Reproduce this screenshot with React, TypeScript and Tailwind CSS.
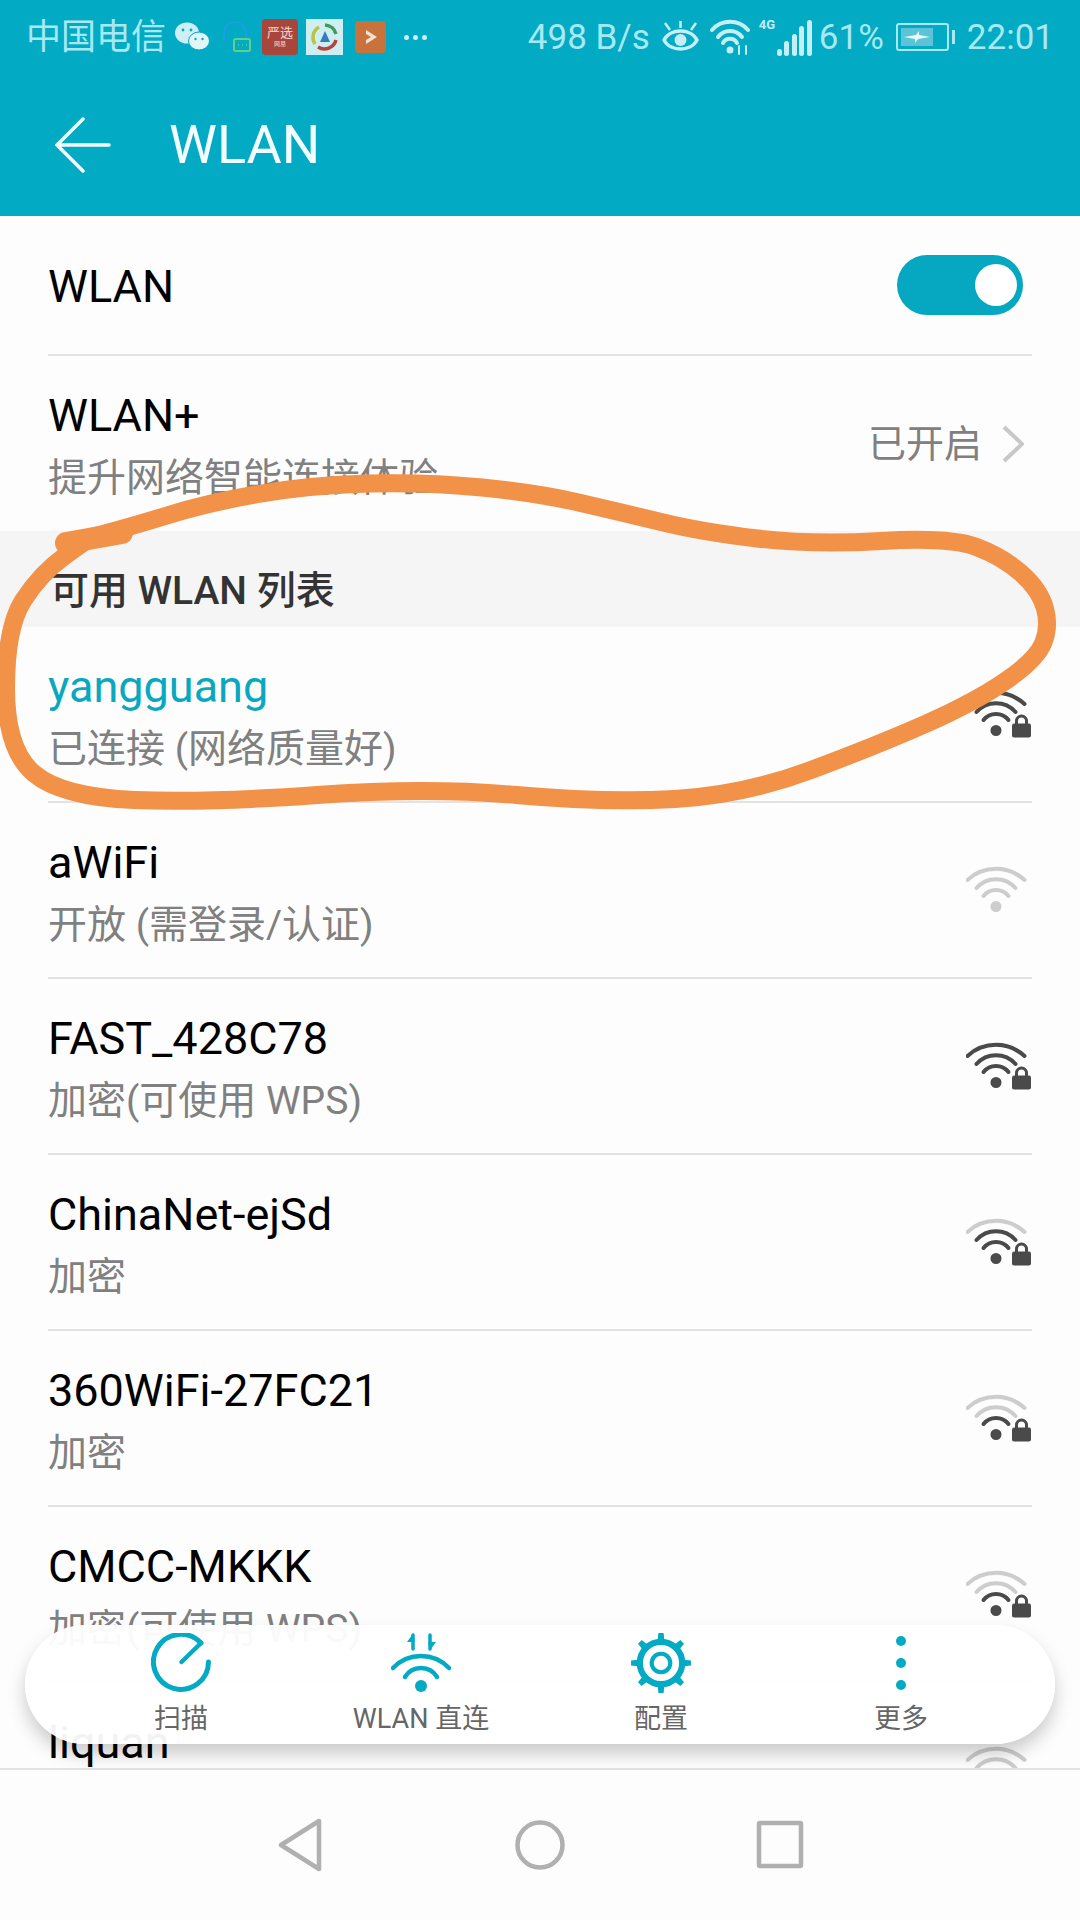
const TEAL = "#02aac4";

const networks = [
  { name: "yangguang", sub: "已连接 (网络质量好)", level: 3, locked: true, active: true },
  { name: "aWiFi", sub: "开放 (需登录/认证)", level: 0, locked: false },
  { name: "FAST_428C78", sub: "加密(可使用 WPS)", level: 3, locked: true },
  { name: "ChinaNet-ejSd", sub: "加密", level: 2, locked: true },
  { name: "360WiFi-27FC21", sub: "加密", level: 1, locked: true },
  { name: "CMCC-MKKK", sub: "加密(可使用 WPS)", level: 1, locked: true },
  { name: "liquan", sub: "加密", level: 1, locked: true },
];

// marker scribble, hand traced from the reference
const scribble: [number, number][] = [
  [69, 543], [127, 528], [207, 503], [310, 485], [427, 482], [537, 493], [620, 512], [702, 532],
  [813, 545], [950, 537], [1003, 557], [1040, 590], [1050, 627], [1036, 660], [975, 702], [878, 745],
  [744, 795], [606, 803], [427, 787], [207, 803], [62, 797], [6, 750], [6, 627], [41, 573], [90, 538],
];

function smoothPath(pts: [number, number][]) {
  let d = `M${pts[0][0]} ${pts[0][1]}`;
  for (let i = 1; i < pts.length - 1; i++) {
    const mx = (pts[i][0] + pts[i + 1][0]) / 2;
    const my = (pts[i][1] + pts[i + 1][1]) / 2;
    d += ` Q${pts[i][0]} ${pts[i][1]} ${mx} ${my}`;
  }
  const last = pts[pts.length - 1];
  return d + ` L${last[0]} ${last[1]}`;
}

const WifiIcon = ({ level, locked }: { level: number; locked: boolean }) => {
  const dark = "#4a4a4a";
  const light = "#cdcdcd";
  const base = level === 0 ? light : dark;
  return (
    <svg width="66" height="48" viewBox="0 0 66 48" fill="none" strokeWidth="4" strokeLinecap="round">
      <path d="M1.5 14 A42 42 0 0 1 58.5 14" stroke={level >= 3 ? dark : light} />
      <path d="M10.5 22 A26 26 0 0 1 49.5 22" stroke={level >= 2 ? dark : light} />
      <path d="M17.5 30 A16 16 0 0 1 42.5 30" stroke={level >= 1 ? dark : light} />
      <circle cx="30" cy="40.5" r="5.5" fill={base} />
      {locked && (
        <g>
          <rect x="46" y="33.5" width="19" height="14" rx="2" fill={dark} />
          <path d="M50.5 35 V31 a5 5 0 0 1 10 0 V35" stroke={dark} strokeWidth="3" />
        </g>
      )}
    </svg>
  );
};

const NetworkRow = ({ name, sub, level, locked, active }: (typeof networks)[number] & { active?: boolean }) => (
  <div className="flex h-[176px] shrink-0 items-center justify-between border-b-2 border-[#e3e3e3]">
    <div className="flex flex-col pt-[6px]">
      <div className={`text-[45px] leading-[52px] ${active ? "text-[#0aa8bf]" : "text-black"}`}>{name}</div>
      <div className="mt-[11px] text-[39px] leading-[50px] text-[#808080]">{sub}</div>
    </div>
    <WifiIcon level={level} locked={locked} />
  </div>
);

const StatusLeft = () => (
  <div className="flex items-center">
    <span className="w-[148px] text-[35px] leading-none text-[#a6e9f3]">中国电信</span>
    <svg width="36" height="30" viewBox="0 0 36 30" className="mr-[12px]">
      <ellipse cx="13" cy="11" rx="12" ry="10.5" fill="#cdeff5" />
      <ellipse cx="25" cy="19" rx="10.5" ry="9" fill="#e2f6f9" stroke={TEAL} strokeWidth="1" />
      <circle cx="9" cy="8" r="1.4" fill={TEAL} />
      <circle cx="17" cy="8" r="1.4" fill={TEAL} />
      <circle cx="21.5" cy="17" r="1.2" fill={TEAL} />
      <circle cx="28.5" cy="17" r="1.2" fill={TEAL} />
    </svg>
    <svg width="30" height="34" viewBox="0 0 30 34" fill="none" className="mr-[10px]">
      <path d="M2 22 V13 a11 11 0 0 1 22 0 V18" stroke="#1a9fe0" strokeWidth="2" />
      <rect x="12" y="19" width="16" height="12" rx="1.5" stroke="#5fd18a" strokeWidth="2" />
      <path d="M16 25 h1 M20 25 h1 M24 25 h1" stroke="#5fd18a" strokeWidth="1.5" />
    </svg>
    <div className="mr-[8px] flex h-[36px] w-[36px] flex-col items-center justify-center rounded-[4px] bg-[#a9463c] text-[#f3d9d2]">
      <span className="text-[13px] leading-[14px]">严选</span>
      <span className="text-[6px] leading-[8px]">网易</span>
    </div>
    <div className="mr-[12px] flex h-[36px] w-[37px] items-center justify-center bg-[#cfeef2]">
      <svg width="30" height="30" viewBox="0 0 30 30" fill="none" strokeWidth="3.5">
        <path d="M15 3 A12 12 0 0 1 26 12" stroke="#3f9c5a" />
        <path d="M26 18 A12 12 0 0 1 8 25" stroke="#b8433c" />
        <path d="M5 22 A12 12 0 0 1 9 5" stroke="#b7c63c" />
        <path d="M15 9 L20 20 H10 Z" fill="#2f7fc0" stroke="none" />
      </svg>
    </div>
    <div className="mr-[18px] flex h-[32px] w-[31px] items-center justify-center rounded-[4px] bg-[#c8733c]">
      <svg width="16" height="16" viewBox="0 0 16 16" fill="#f3e2d3">
        <path d="M3 1 L14 8 L3 15 V11 L8 8 L3 5 Z" />
      </svg>
    </div>
    <div className="flex gap-[4px]">
      <span className="h-[5px] w-[5px] rounded-full bg-[#cdeff5]" />
      <span className="h-[5px] w-[5px] rounded-full bg-[#cdeff5]" />
      <span className="h-[5px] w-[5px] rounded-full bg-[#cdeff5]" />
    </div>
  </div>
);

const StatusRight = () => (
  <div className="flex items-center text-[35px] leading-none text-[#a6e9f3]">
    <span className="mr-[12px]">498 B/s</span>
    <svg width="37" height="34" viewBox="0 0 37 34" fill="none" stroke="#c5eff6" strokeWidth="3.5" className="mr-[11px]">
      <path d="M2 20 C8 8 29 8 35 20 C29 32 8 32 2 20 Z" />
      <circle cx="18.5" cy="20" r="6" fill="#c5eff6" stroke="none" />
      <path d="M18.5 8 V1 M8 10 L3 3 M29 10 L34 3" strokeWidth="2.5" />
    </svg>
    <svg width="40" height="36" viewBox="0 0 40 36" fill="none" stroke="#c5eff6" strokeLinecap="round" className="mr-[27px]">
      <path d="M2 11 A24 24 0 0 1 38 11" strokeWidth="4" />
      <path d="M8 18 A15 15 0 0 1 32 18" strokeWidth="4" />
      <path d="M13 24 A8 8 0 0 1 27 24" strokeWidth="4" />
      <circle cx="20" cy="31" r="3.5" fill="#c5eff6" stroke="none" />
      <path d="M29 27 V35 M36 27 V35" strokeWidth="2" />
    </svg>
    <div className="relative mr-[7px] h-[38px] w-[35px]">
      <span className="absolute left-[-18px] top-[0px] text-[13px] font-bold leading-none text-[#c5eff6]">4G</span>
      <div className="flex h-full items-end justify-between">
        <span className="h-[7px] w-[5px] rounded-full bg-[#c5eff6]" />
        <span className="h-[15px] w-[5px] rounded-full bg-[#c5eff6]" />
        <span className="h-[22px] w-[5px] rounded-full bg-[#c5eff6]" />
        <span className="h-[30px] w-[5px] rounded-full bg-[#c5eff6]" />
        <span className="h-[36px] w-[5px] rounded-full bg-[#c5eff6]" />
      </div>
    </div>
    <span className="mr-[12px]">61%</span>
    <div className="mr-[3px] flex h-[28px] w-[53px] items-center rounded-[3px] border-2 border-[#a6e9f3] p-[3px]">
      <div className="flex h-full w-[32px] items-center justify-center bg-[#5cc4d6]">
        <svg width="26" height="12" viewBox="0 0 26 12" fill="#e8fbfd">
          <path d="M0 6 L12 4 L15 0 L15 4 L26 6 L14 8 L11 12 L11 8 Z" />
        </svg>
      </div>
    </div>
    <span className="mr-[12px] h-[14px] w-[3px] bg-[#a6e9f3]" />
    <span>22:01</span>
  </div>
);

const ScanIcon = () => (
  <svg width="60" height="60" viewBox="0 0 60 60" fill="none" stroke={TEAL} strokeWidth="5" strokeLinecap="round">
    <path d="M50 10 A27.5 27.5 0 1 0 57.5 29" />
    <path d="M50 10 L30.5 29" strokeWidth="4.5" />
  </svg>
);

const DirectIcon = () => (
  <svg width="60" height="60" viewBox="0 0 60 60" fill="none" stroke={TEAL} strokeWidth="4.5" strokeLinecap="round">
    <path d="M2 35 A38.7 38.7 0 0 1 58 35" />
    <path d="M14 44 A18.7 18.7 0 0 1 46 44" />
    <circle cx="30" cy="53" r="6" fill={TEAL} stroke="none" />
    <path d="M22 2 V16 M39 2 V16" strokeWidth="3.5" />
    <path d="M22.5 0 L23.5 9 L16 9 Z" fill={TEAL} stroke="none" />
    <path d="M38.5 18 L37.5 9 L45 9 Z" fill={TEAL} stroke="none" />
  </svg>
);

const GearIcon = () => (
  <svg width="62" height="62" viewBox="0 0 60 60" fill="none" stroke={TEAL} className="-my-px">
    <circle cx="30" cy="30" r="20.5" strokeWidth="6" />
    <circle cx="30" cy="30" r="9" strokeWidth="4" />
    {[0, 45, 90, 135, 180, 225, 270, 315].map((a) => (
      <path key={a} d="M26.5 10 L27.5 1 H32.5 L33.5 10 Z" fill={TEAL} stroke="none" transform={`rotate(${a} 30 30)`} />
    ))}
  </svg>
);

const MoreIcon = () => (
  <svg width="60" height="60" viewBox="0 0 60 60" fill={TEAL}>
    <circle cx="30" cy="8" r="5" />
    <circle cx="30" cy="30" r="5" />
    <circle cx="30" cy="52" r="5" />
  </svg>
);

const actions = [
  { label: "扫描", icon: <ScanIcon /> },
  { label: "WLAN 直连", icon: <DirectIcon /> },
  { label: "配置", icon: <GearIcon /> },
  { label: "更多", icon: <MoreIcon /> },
];

export default function App() {
  return (
    <div className="relative flex h-[1920px] w-[1080px] flex-col overflow-hidden bg-[#fdfdfd] font-[Roboto,'Noto_Sans_CJK_SC',sans-serif]">
      <header className="h-[216px] shrink-0 bg-[#02aac4]">
        <div className="flex h-[74px] items-center justify-between pl-[26px] pr-[26px]">
          <StatusLeft />
          <StatusRight />
        </div>
        <div className="flex h-[142px] items-center pl-[55px]">
          <svg width="56" height="56" viewBox="0 0 56 56" fill="none" stroke="#f2fdff" strokeWidth="3.5" strokeLinecap="round">
            <path d="M28 2 L2 28 L28 54 M2 28 H54" />
          </svg>
          <span className="ml-[58px] text-[54px] leading-none text-[#f2fdff]">WLAN</span>
        </div>
      </header>

      <main className="flex min-h-0 flex-1 flex-col overflow-hidden">
        <div className="pl-[48px] pr-[48px]">
          <div className="flex h-[140px] items-center justify-between border-b-2 border-[#e3e3e3] pr-[9px]">
            <span className="pt-[3px] text-[45px] leading-none text-black">WLAN</span>
            <div className="flex h-[60px] w-[126px] items-center justify-end rounded-full bg-[#05a8c0] pr-[6px]">
              <span className="h-[42px] w-[42px] rounded-full bg-white" />
            </div>
          </div>
          <div className="flex h-[175px] items-center justify-between pr-[8px]">
            <div className="flex flex-col pt-[6px]">
              <span className="text-[45px] leading-[52px] text-black">WLAN+</span>
              <span className="mt-[11px] text-[39px] leading-[50px] text-[#808080]">提升网络智能连接体验</span>
            </div>
            <div className="flex items-center">
              <span className="text-[38px] leading-none text-[#808080]">已开启</span>
              <svg width="22" height="38" viewBox="0 0 22 38" fill="none" stroke="#c8c8c8" strokeWidth="4" className="ml-[20px]">
                <path d="M2 2 L20 19 L2 36" />
              </svg>
            </div>
          </div>
        </div>

        <div className="flex h-[96px] shrink-0 items-center bg-[#f5f5f5] pl-[50px] pt-[24px] text-[39px] font-medium leading-none text-[#333333]">
          可用 WLAN 列表
        </div>

        <div className="flex flex-col pl-[48px] pr-[48px]">
          {networks.map((n) => (
            <NetworkRow key={n.name} {...n} />
          ))}
        </div>
      </main>

      <nav className="flex h-[152px] shrink-0 items-center justify-center gap-[180px] border-t-2 border-[#e3e3e3] bg-[#fdfdfd]">
        <svg width="60" height="54" viewBox="0 0 60 54" fill="none" stroke="#b0b0b0" strokeWidth="4.5" strokeLinejoin="round">
          <path d="M49 3 V51 L11 27 Z" />
        </svg>
        <svg width="60" height="54" viewBox="0 0 60 54" fill="none" stroke="#b0b0b0" strokeWidth="4.5">
          <circle cx="30" cy="27" r="22.5" />
        </svg>
        <svg width="60" height="54" viewBox="0 0 60 54" fill="none" stroke="#b0b0b0" strokeWidth="4.5" strokeLinejoin="round">
          <rect x="9" y="5" width="42" height="43" rx="1" />
        </svg>
      </nav>

      {/* floating action bar */}
      <div className="absolute left-[25px] top-[1625px] grid h-[119px] w-[1030px] grid-cols-4 rounded-[60px] bg-white/95 pl-[36px] pr-[34px] pt-[8px] shadow-[0_10px_18px_rgba(0,0,0,0.2)]">
        {actions.map((a) => (
          <div key={a.label} className="flex flex-col items-center">
            {a.icon}
            <span className="mt-[11px] text-[27px] leading-[30px] text-[#666666]">{a.label}</span>
          </div>
        ))}
      </div>

      {/* orange marker annotation over the screenshot */}
      <svg width="1080" height="1920" viewBox="0 0 1080 1920" fill="none" className="pointer-events-none absolute left-0 top-0">
        <path d={smoothPath(scribble)} stroke="#f29148" strokeWidth="18" strokeLinecap="round" strokeLinejoin="round" />
        <path d="M66 543 L122 533" stroke="#f29148" strokeWidth="22" strokeLinecap="round" />
      </svg>
    </div>
  );
}
